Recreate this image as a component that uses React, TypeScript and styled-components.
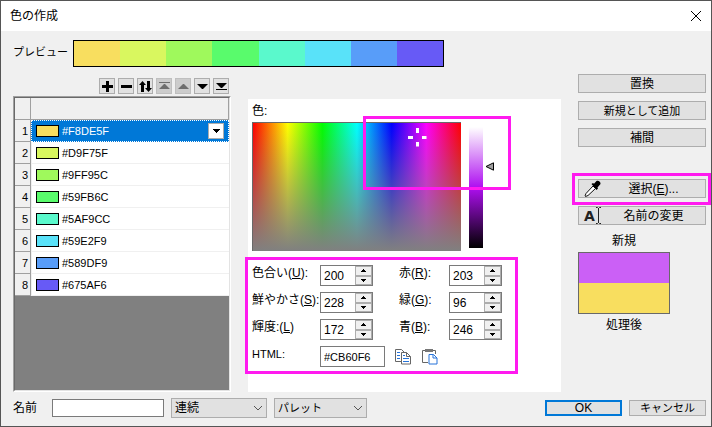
import React, { useState } from 'react';
import styled, { createGlobalStyle } from 'styled-components';

const GlobalStyle = createGlobalStyle`
  * { box-sizing: border-box; }
  body { margin: 0; background: #f0f0f0; }
  body, button, input, select {
    font-family: "Liberation Sans", "Noto Sans CJK JP", sans-serif;
    font-size: 12px;
    line-height: 16px;
    color: #000;
  }
  svg { display: block; flex: none; }
`;

const highlight = '#ff1aef';

const Dialog = styled.div`
  display: flex;
  flex-direction: column;
  min-height: 100vh;
  background: #f0f0f0;
  border: 1px solid #555;
`;

const TitleBar = styled.header`
  display: flex;
  align-items: center;
  justify-content: space-between;
  height: 30px;
  padding: 0 9px;
  background: #fff;
`;

const Title = styled.h1`
  margin: 0;
  font-size: 12px;
  font-weight: 400;
  line-height: 16px;
`;

const CloseButton = styled.button`
  padding: 0;
  border: 0;
  background: none;
`;

const PreviewRow = styled.div`
  display: flex;
  align-items: center;
  padding: 9px 267px 7px 12px;
`;

const SmallText = styled.span`
  font-size: 11px;
`;

const PreviewLabel = styled(SmallText)`
  width: 60px;
  white-space: nowrap;
  padding-bottom: 3px;
`;

const Gradient = styled.div`
  display: flex;
  flex: 1;
  height: 27px;
  border: 1px solid #000;
`;

const Band = styled.div<{ $color: string }>`
  flex: 1;
  background: ${(p) => p.$color};
`;

const Main = styled.main`
  display: flex;
  flex: 1;
  gap: 17px;
  padding: 0 5px 0 12px;
`;

const ListColumn = styled.section`
  display: flex;
  flex-direction: column;
  width: 218px;
  padding-top: 4px;
`;

const Toolbar = styled.div`
  display: flex;
  justify-content: flex-end;
  gap: 3px;
  padding: 0 2px 2px 0;
`;

const ToolButton = styled.button`
  display: flex;
  align-items: center;
  justify-content: center;
  width: 16px;
  height: 16px;
  padding: 0;
  border: 1px solid #adadad;
  background: #e1e1e1;
  color: #000;
  &:disabled { background: #ccc; border-color: #bfbfbf; color: #6d6d6d; }
`;

const ListFrame = styled.div`
  flex: 1;
  border: 1px solid #fff;
  border-top-color: #a0a0a0;
  border-left-color: #a0a0a0;
  background: #808080;
`;

const ListInner = styled.div`
  height: 100%;
  border: 1px solid #e3e3e3;
  border-top-color: #696969;
  border-left-color: #696969;
`;

const ColorTable = styled.table`
  width: 100%;
  border-collapse: separate;
  border-spacing: 0;
  table-layout: fixed;
  background: #fff;
`;

const HeadCell = styled.th<{ $narrow?: boolean }>`
  width: ${(p) => (p.$narrow ? '16px' : 'auto')};
  height: 22px;
  padding: 0;
  background: #f0f0f0;
  border: 1px solid #a0a0a0;
  border-width: 0 1px 1px 0;
`;

const NumberCell = styled.th`
  height: 22px;
  padding: 0 2px 0 0;
  background: #f0f0f0;
  border: 1px solid #a0a0a0;
  border-width: 0 1px 1px 0;
  font-weight: 400;
  font-size: 11px;
  text-align: right;
`;

const ColorCell = styled.td<{ $selected: boolean }>`
  height: 22px;
  padding: 0 4px;
  background: ${(p) => (p.$selected ? '#0078d7' : '#fff')};
  color: ${(p) => (p.$selected ? '#fff' : '#000')};
  border: 1px ${(p) => (p.$selected ? 'dotted #fff' : 'solid #f0f0f0')};
  border-width: ${(p) => (p.$selected ? '1px' : '0 0 1px 1px')};
  font-size: 11px;
`;

const CellContent = styled.div`
  display: flex;
  align-items: center;
  gap: 3px;
  height: 20px;
`;

const Swatch = styled.span<{ $color: string }>`
  width: 23px;
  height: 12px;
  border: 1px solid #000;
  background: ${(p) => p.$color};
`;

const DropButton = styled(ToolButton)`
  margin-left: auto;
  background: #fff;
`;

const Panel = styled.section`
  flex: 1;
  min-width: 0;
  margin-top: 25px;
  padding: 4px 4px 0;
  background: #fff;
`;

const PanelLabel = styled.div`
  height: 19px;
`;

const Picker = styled.div`
  position: relative;
  display: flex;
  height: 129px;
  padding-right: 63px;
`;

const HueField = styled.div`
  position: relative;
  flex: 1;
  border: 1px solid #696969;
  border-width: 1px 0 0 1px;
  background:
    linear-gradient(rgba(128, 128, 128, 0), #808080),
    linear-gradient(90deg, #f00, #ff0, #0f0, #0ff, #00f, #f0f, #f00);
`;

const Crosshair = styled.svg`
  position: absolute;
  left: 79%;
  top: 11%;
  transform: translate(-50%, -50%);
`;

const LumStrip = styled.div`
  width: 14px;
  margin: 5px 2px 3px 8px;
  background: linear-gradient(#fff, #ae0ff0 50%, #000);
`;

const LumPointer = styled.svg`
  align-self: flex-start;
  margin-top: 40px;
`;

const PickerMark = styled.div`
  position: absolute;
  top: -6px;
  right: 46px;
  width: 148px;
  height: 74px;
  border: 3px solid ${highlight};
  pointer-events: none;
`;

const Fields = styled.div`
  position: relative;
  display: grid;
  grid-template-columns: 68px 79px 50px 1fr;
  row-gap: 6px;
  margin-top: 14px;
`;

const FieldsMark = styled.div`
  position: absolute;
  inset: -8px 39px -7px -7px;
  border: 3px solid ${highlight};
  pointer-events: none;
`;

const FieldLabel = styled.label`
  white-space: nowrap;
`;

const Spinner = styled.div`
  display: flex;
  width: 53px;
  height: 21px;
  border: 1px solid #7a7a7a;
`;

const SpinInput = styled.input`
  flex: 1;
  min-width: 0;
  padding: 0 0 0 3px;
  border: 0;
  outline: 0;
`;

const SpinButtons = styled.div`
  display: flex;
  flex-direction: column;
  width: 17px;
`;

const SpinButton = styled.button`
  display: flex;
  flex: 1;
  align-items: center;
  justify-content: center;
  padding: 0;
  border: 1px solid #adadad;
  background: #f0f0f0;
`;

const HtmlRow = styled.div`
  display: flex;
  grid-column: 2 / -1;
  align-items: center;
  gap: 9px;
`;

const HtmlInput = styled.input`
  width: 65px;
  height: 21px;
  padding: 0 3px;
  border: 1px solid #7a7a7a;
  font-size: 11px;
`;

const IconButton = styled.button`
  padding: 0;
  border: 0;
  background: none;
`;

const Side = styled.aside`
  display: flex;
  flex-direction: column;
  gap: 8px;
  width: 128px;
`;

const Button = styled.button<{ $primary?: boolean; $small?: boolean }>`
  display: flex;
  align-items: center;
  justify-content: center;
  height: 19px;
  padding: 0;
  border: ${(p) => (p.$primary ? '2px solid #0078d7' : '1px solid #adadad')};
  background: #e1e1e1;
  font-size: ${(p) => (p.$small ? '11px' : '12px')};
`;

const IconTextButton = styled(Button)`
  width: 100%;
  justify-content: flex-start;
  padding-left: 5px;
`;

const ButtonText = styled.span`
  flex: 1;
  text-align: center;
`;

const ButtonIcon = styled.span`
  display: flex;
  align-items: center;
  gap: 1px;
  width: 18px;
`;

const BoldLetter = styled.span`
  font-family: "DejaVu Sans", sans-serif;
  font-size: 14px;
  font-weight: 700;
  color: #222;
`;

const MarkedButton = styled.div`
  position: relative;
  margin-top: 24px;
`;

const ButtonMark = styled.div`
  position: absolute;
  inset: -6px -5px -7px -6px;
  border: 3px solid ${highlight};
  pointer-events: none;
`;

const Compare = styled.div`
  display: flex;
  flex-direction: column;
  align-items: center;
  gap: 3px;
  width: 92px;
`;

const CompareBox = styled.div`
  display: flex;
  flex-direction: column;
  width: 100%;
  height: 62px;
  border: 1px solid #696969;
`;

const Footer = styled.footer`
  display: flex;
  align-items: center;
  gap: 7px;
  padding: 6px 5px 8px 12px;
`;

const NameLabel = styled.label`
  width: 32px;
`;

const NameInput = styled.input`
  width: 112px;
  height: 18px;
  padding: 0 3px;
  border: 1px solid #7a7a7a;
`;

const SelectBox = styled.div<{ $width: number }>`
  display: grid;
  align-items: center;
  width: ${(p) => p.$width}px;
  > * { grid-area: 1 / 1; }
  > svg { justify-self: end; margin-right: 4px; pointer-events: none; }
`;

const Select = styled.select<{ $small?: boolean }>`
  width: 100%;
  height: 20px;
  padding: 0 16px 0 3px;
  border: 1px solid #adadad;
  border-radius: 0;
  background: #e1e1e1;
  appearance: none;
  font-size: ${(p) => (p.$small ? '11px' : '12px')};
`;

const FooterButtons = styled.div`
  display: grid;
  grid-template-columns: 77px 77px;
  align-items: center;
  gap: 7px;
  margin-left: auto;
`;

const FooterButton = styled(Button)`
  height: 16px;
  line-height: 12px;
`;

const colors = ['#F8DE5F', '#D9F75F', '#9FF95C', '#59FB6C', '#5AF9CC', '#59E2F9', '#589DF9', '#675AF6'];

const tools = [
  { name: '追加', d: 'M5 1h3v4h4v3H8v4H5V8H1V5h4z' },
  { name: '削除', d: 'M1 5h11v3H1z' },
  { name: '反転', d: 'M3.500 1L0 5h2v7h3V5h2zM9.500 12L13 8h-2V1H8v7H6z' },
  { name: '先頭へ', d: 'M1 2h11v1H1zM6 4h1l5 5H1z', disabled: true },
  { name: '上へ', d: 'M6 4h1l5 5H1z', disabled: true },
  { name: '下へ', d: 'M1 4h11L7 9H6z' },
  { name: '末尾へ', d: 'M1 3h11L7 8H6zM1 9h11v1H1z' },
];

function Spin({ id, value }: { id: string; value: number }) {
  const [v, setV] = useState(value);
  const clamp = (n: number) => Math.max(0, Math.min(255, n));
  return (
    <Spinner>
      <SpinInput id={id} value={v} onChange={(e) => setV(clamp(Number(e.target.value) || 0))} />
      <SpinButtons>
        <SpinButton aria-label="増やす" onClick={() => setV(clamp(v + 1))}>
          <svg width="5" height="3" shapeRendering="crispEdges"><path d="M2 0h1v1h1v1h1v1H0V2h1V1h1z" /></svg>
        </SpinButton>
        <SpinButton aria-label="減らす" onClick={() => setV(clamp(v - 1))}>
          <svg width="5" height="3" shapeRendering="crispEdges"><path d="M0 0h5v1H4v1H3v1H2V2H1V1H0z" /></svg>
        </SpinButton>
      </SpinButtons>
    </Spinner>
  );
}

function Chevron() {
  return (
    <svg width="10" height="6" fill="none" stroke="#555"><path d="M1 1l4 4 4-4" /></svg>
  );
}

export default function App() {
  const [selected, setSelected] = useState(0);
  return (
    <Dialog role="dialog" aria-labelledby="title">
      <GlobalStyle />
      <TitleBar>
        <Title id="title">色の作成</Title>
        <CloseButton aria-label="閉じる">
          <svg width="12" height="12" fill="none" stroke="#000"><path d="M1 1l10 10M11 1L1 11" /></svg>
        </CloseButton>
      </TitleBar>
      <PreviewRow>
        <PreviewLabel>プレビュー</PreviewLabel>
        <Gradient>{colors.map((c) => <Band key={c} $color={c} />)}</Gradient>
      </PreviewRow>
      <Main>
        <ListColumn>
          <Toolbar>
            {tools.map((t) => (
              <ToolButton key={t.name} aria-label={t.name} disabled={t.disabled}>
                <svg width="13" height="13" fill="currentColor"><path d={t.d} /></svg>
              </ToolButton>
            ))}
          </Toolbar>
          <ListFrame>
            <ListInner>
              <ColorTable>
                <thead><tr><HeadCell $narrow /><HeadCell /></tr></thead>
                <tbody>
                  {colors.map((c, i) => (
                    <tr key={c} onClick={() => setSelected(i)}>
                      <NumberCell scope="row">{i + 1}</NumberCell>
                      <ColorCell $selected={i === selected}>
                        <CellContent>
                          <Swatch $color={c} />
                          {c}
                          {i === selected && (
                            <DropButton aria-label="色を選ぶ">
                              <svg width="7" height="4" shapeRendering="crispEdges"><path d="M0 0h7v1H6v1H5v1H4v1H3V3H2V2H1V1H0z" /></svg>
                            </DropButton>
                          )}
                        </CellContent>
                      </ColorCell>
                    </tr>
                  ))}
                </tbody>
              </ColorTable>
            </ListInner>
          </ListFrame>
        </ListColumn>

        <Panel>
          <PanelLabel>色:</PanelLabel>
          <Picker>
            <HueField>
              <Crosshair width="19" height="19" fill="#fff" shapeRendering="crispEdges">
                <path d="M8 0h3v5H8zM8 14h3v5H8zM0 8h5v3H0zM14 8h5v3h-5z" />
              </Crosshair>
            </HueField>
            <LumStrip />
            <LumPointer width="9" height="9" fill="#a0a0a0" stroke="#000"><path d="M1 4.500L8.500 .8v7.400z" /></LumPointer>
            <PickerMark />
          </Picker>
          <Fields>
            <FieldLabel htmlFor="hue">色合い(<u>U</u>):</FieldLabel>
            <Spin id="hue" value={200} />
            <FieldLabel htmlFor="red">赤(<u>R</u>):</FieldLabel>
            <Spin id="red" value={203} />
            <FieldLabel htmlFor="sat">鮮やかさ(<u>S</u>):</FieldLabel>
            <Spin id="sat" value={228} />
            <FieldLabel htmlFor="green">緑(<u>G</u>):</FieldLabel>
            <Spin id="green" value={96} />
            <FieldLabel htmlFor="lum">輝度:(<u>L</u>)</FieldLabel>
            <Spin id="lum" value={172} />
            <FieldLabel htmlFor="blue">青(<u>B</u>):</FieldLabel>
            <Spin id="blue" value={246} />
            <FieldLabel htmlFor="html"><SmallText>HTML:</SmallText></FieldLabel>
            <HtmlRow>
              <HtmlInput id="html" defaultValue="#CB60F6" />
              <IconButton aria-label="コピー">
                <svg width="18" height="17" fill="none" stroke="#666">
                  <path d="M7 13.500H1.500V1.500H7.500L10.500 4.500" />
                  <path d="M3 4.500h3M3 7.500h3M3 10.500h3" stroke="#2673d9" />
                  <path d="M7.500 4.500h5l4 4v7.500h-9zM12.500 4.500v4h4" fill="#fff" />
                  <path d="M9 7.500h2M9 10.500h6M9 13.500h6" stroke="#2673d9" />
                </svg>
              </IconButton>
              <IconButton aria-label="貼り付け">
                <svg width="17" height="17" fill="none" stroke="#666">
                  <path d="M7 14.500H1.500V2.500h13V6" />
                  <path d="M4 1h8v3H4z" fill="#777" stroke="none" />
                  <path d="M8 6.500h4.500L16 10v6H8zM12 6.500V10h4" fill="#fff" stroke="#2673d9" />
                </svg>
              </IconButton>
            </HtmlRow>
            <FieldsMark />
          </Fields>
        </Panel>

        <Side>
          <Button>置換</Button>
          <Button $small>新規として追加</Button>
          <Button>補間</Button>
          <MarkedButton>
            <IconTextButton>
              <ButtonIcon>
                <svg width="17" height="17">
                  <path d="M9 6l2.500 2.500L4 15.500 1.500 16.500 1 16l1-2.500z" fill="#fff" stroke="#111" />
                  <path d="M7.500 4L9 3l1 .8L12.500 1C14 0 17 1.500 16.500 4L13.500 7.500l.5 1-1.500 1.500z" fill="#000" />
                </svg>
              </ButtonIcon>
              <ButtonText>選択(<u>E</u>)...</ButtonText>
            </IconTextButton>
            <ButtonMark />
          </MarkedButton>
          <IconTextButton>
            <ButtonIcon>
              <BoldLetter aria-hidden="true">A</BoldLetter>
              <svg width="5" height="17" fill="none" stroke="#222"><path d="M0 .5h1.500l1 1 1-1H5M2.500 1v15M0 16.500h1.500l1-1 1 1H5" /></svg>
            </ButtonIcon>
            <ButtonText>名前の変更</ButtonText>
          </IconTextButton>
          <Compare>
            <span>新規</span>
            <CompareBox>
              <Band $color="#CB60F6" />
              <Band $color="#F8DE5F" />
            </CompareBox>
            <span>処理後</span>
          </Compare>
        </Side>
      </Main>
      <Footer>
        <NameLabel htmlFor="name">名前</NameLabel>
        <NameInput id="name" />
        <SelectBox $width={96}>
          <Select aria-label="種類"><option>連続</option></Select>
          <Chevron />
        </SelectBox>
        <SelectBox $width={93}>
          <Select $small aria-label="形式"><option>パレット</option></Select>
          <Chevron />
        </SelectBox>
        <FooterButtons>
          <FooterButton $primary>OK</FooterButton>
          <FooterButton $small>キャンセル</FooterButton>
        </FooterButtons>
      </Footer>
    </Dialog>
  );
}
